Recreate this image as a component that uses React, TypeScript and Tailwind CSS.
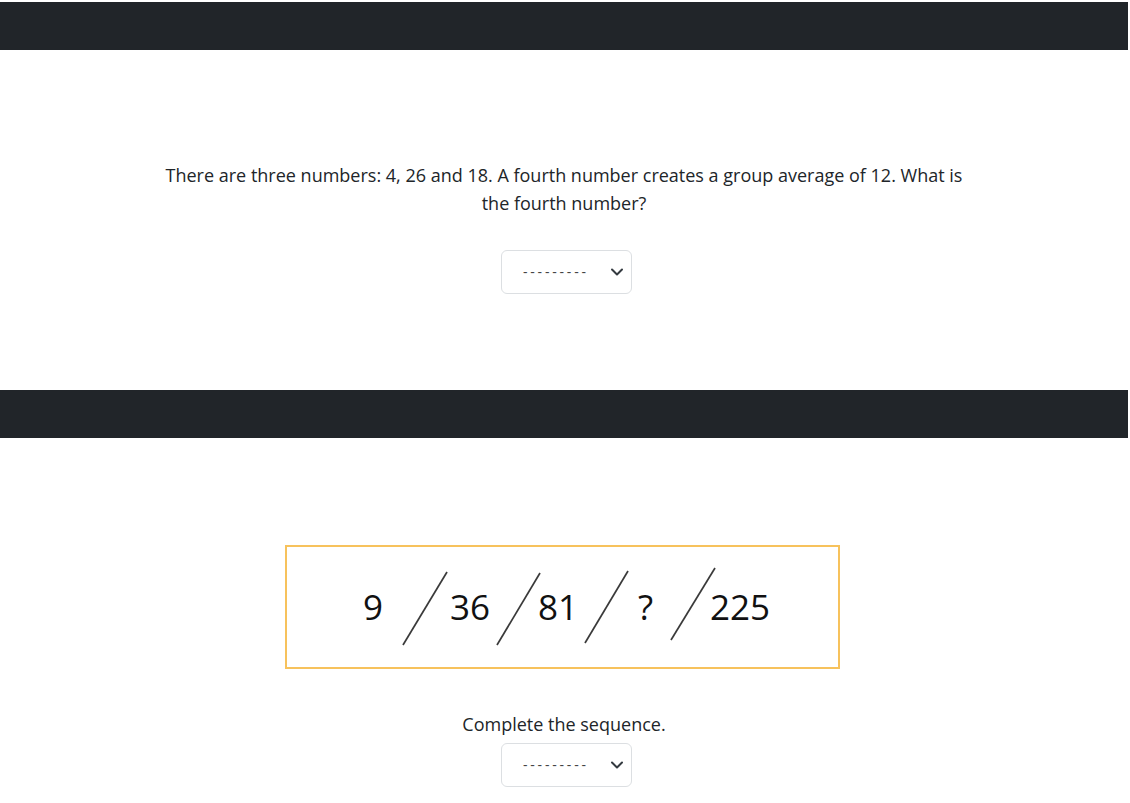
import { useState } from 'react'

const font = { fontFamily: '"Open Sans", "Noto Sans", sans-serif' }

function Bar() {
  return <div className="h-12 w-full bg-[#212529]" />
}

function Dropdown() {
  const [value, setValue] = useState('')
  return (
    <div className="relative h-11 w-[131px]">
      <select
        value={value}
        onChange={(e) => setValue(e.target.value)}
        className="h-11 w-[131px] appearance-none rounded-md border border-[#dcdfe2] bg-white pl-[21px] pr-9 text-[14px] leading-none tracking-[2.8px] text-[#444] outline-none"
        style={font}
      >
        <option value="">---------</option>
        <option value="1">0</option>
        <option value="2">10</option>
      </select>
      <svg
        className="pointer-events-none absolute right-[7px] top-[16px]"
        width="16"
        height="12"
        viewBox="0 2 16 12"
      >
        <path d="m3 5.5 5 5 5-5" fill="none" stroke="#343a40" strokeWidth="2" strokeLinecap="round" strokeLinejoin="round" />
      </svg>
    </div>
  )
}

function SequencePicture() {
  const nums = [
    { t: '9', x: 76 },
    { t: '36', x: 163 },
    { t: '81', x: 251 },
    { t: '?', x: 351 },
    { t: '225', x: 423 },
  ]
  const slashes = [
    [116, 98, 160, 25],
    [210, 98, 253, 26],
    [298, 96, 341, 24],
    [384, 93, 428, 21],
  ]
  return (
    <div className="mr-[3px] h-[124px] w-[555px] border-2 border-[#f7c25c] bg-white">
      <svg width="551" height="120" viewBox="0 0 551 120">
        {slashes.map(([x1, y1, x2, y2], i) => (
          <line key={i} x1={x1} y1={y1} x2={x2} y2={y2} stroke="#3a3a3a" strokeWidth="1.7" />
        ))}
        {nums.map((n) => (
          <text
            key={n.t}
            x={n.x}
            y={73}
            fontSize="35"
            fill="#111"
            style={{ fontFamily: '"Open Sans", "Noto Sans", sans-serif' }}
          >
            {n.t}
          </text>
        ))}
      </svg>
    </div>
  )
}

export default function App() {
  return (
    <div className="min-h-[803px] w-[1128px] bg-white pt-[2px] text-[#212529]" style={font}>
      <Bar />
      <section className="flex flex-col items-center pt-[111px] pb-[96px]">
        <p className="w-[815px] text-center text-[18px] leading-[28px]">
          There are three numbers: 4, 26 and 18. A fourth number creates a group average of 12. What is the fourth number?
        </p>
        <div className="ml-[5px] mt-[33px]">
          <Dropdown />
        </div>
      </section>
      <Bar />
      <section className="flex flex-col items-center pt-[107px]">
        <SequencePicture />
        <p className="mt-[41px] text-[18px] leading-[28px]">Complete the sequence.</p>
        <div className="ml-[5px] mt-[5px]">
          <Dropdown />
        </div>
      </section>
    </div>
  )
}
